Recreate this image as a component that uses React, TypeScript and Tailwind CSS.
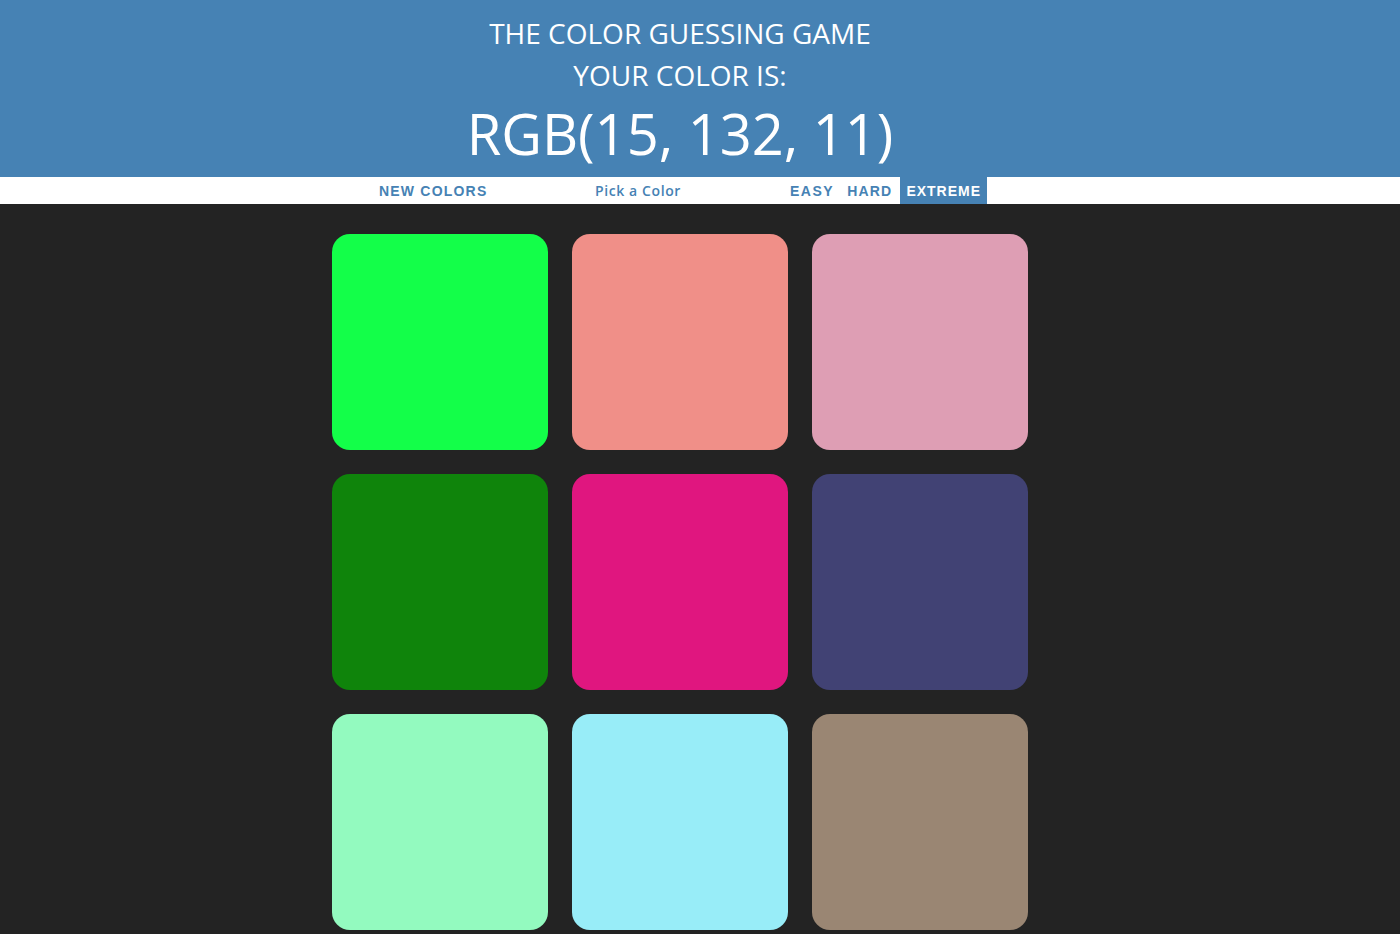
const COLORS = [
  "#13ff49",
  "#f08f88",
  "#de9eb4",
  "rgb(15, 132, 11)",
  "#e0167f",
  "#414274",
  "#93fabf",
  "#98edf8",
  "#9a8673",
];

const App = () => {
  return (
    <div className="min-h-screen bg-[#232323] font-['Open_Sans',sans-serif]">
      <header className="bg-[#4682b4] pr-10 pt-[12px] pb-[6px] text-center text-white">
        <h1 className="text-[28px] leading-[42px] font-normal uppercase">
          The color guessing game
        </h1>
        <h1 className="text-[28px] leading-[42px] font-normal uppercase">
          Your color is:
        </h1>
        <p className="text-[56px] leading-[75px]">RGB(15, 132, 11)</p>
      </header>

      <nav className="h-[27px] bg-white pr-10">
        <div className="relative mx-auto h-full w-[720px] text-[14px] font-bold text-[#4682b4]">
          <button className="absolute top-[1px] left-[59px] h-full font-['Liberation_Sans',sans-serif] tracking-[1.2px] uppercase">
            New colors
          </button>
          <span className="absolute top-0 left-[275px] flex h-full items-center font-['Open_Sans',sans-serif] font-semibold tracking-[0.6px]">
            Pick a Color
          </span>
          <div className="absolute top-0 left-[466px] flex h-full items-stretch font-['Liberation_Sans',sans-serif]">
            <button className="px-[4px] pt-[1px] tracking-[1.5px] uppercase">Easy</button>
            <button className="ml-[5px] px-[4px] pt-[1px] tracking-[1.2px] uppercase">
              Hard
            </button>
            <button className="ml-[4px] bg-[#4682b4] px-[6px] pt-[1px] tracking-[1px] text-white uppercase">
              Extreme
            </button>
          </div>
        </div>
      </nav>

      <main className="pr-10 pt-[30px]">
        <div className="mx-auto grid w-[720px] grid-cols-3 gap-x-[24px] gap-y-[24px] px-[12px]">
          {COLORS.map((c, i) => (
            <div
              key={i}
              className="h-[216px] w-[216px] rounded-[18px]"
              style={{ backgroundColor: c }}
            />
          ))}
        </div>
      </main>
    </div>
  );
};

export default App;
